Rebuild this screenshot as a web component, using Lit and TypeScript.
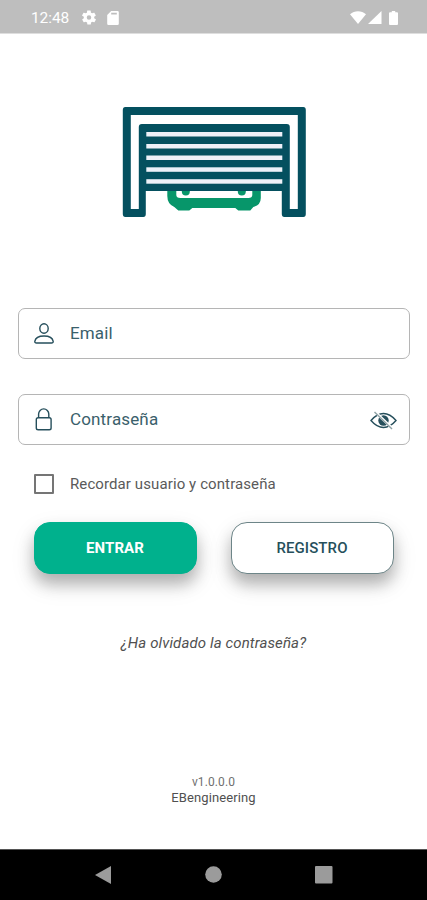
import { LitElement, html, css, svg } from "lit";
import { customElement, state } from "lit/decorators.js";

@customElement("status-bar")
class StatusBar extends LitElement {
  static styles = css`
    :host { display: flex; align-items: center; height: 34px; background: #bebebe; border-bottom: 1px solid #dedede; box-sizing: border-box; padding: 2px 29px 0 31px; color: #fff; font: 15.5px Roboto, sans-serif; }
    .time { width: 51px; letter-spacing: -.1px; }
    .gap { flex: 1; }
    svg { display: block; fill: #fff; }
    .gear { margin-right: 11px; }
    .wifi { margin-right: 2px; }
    .signal { margin-right: 7px; }
  `;
  render() {
    return html`
      <span class="time">12:48</span>
      <svg class="gear" width="14" height="15" viewBox="2 2 20 20"><path d="M19.4 13a7.500 7.500 0 0 0 0-2l2.100-1.600c.2-.2.250-.4.100-.7l-2-3.400c-.1-.2-.4-.3-.6-.2l-2.500 1a7.300 7.300 0 0 0-1.700-1l-.4-2.600a.5.5 0 0 0-.5-.5h-4c-.2 0-.4.2-.5.5l-.4 2.600c-.6.250-1.200.6-1.700 1l-2.500-1c-.2-.1-.5 0-.6.2l-2 3.400c-.1.200-.1.500.1.700L4.600 11a7.500 7.500 0 0 0 0 2l-2.100 1.600c-.2.200-.25.400-.1.700l2 3.400c.1.200.4.300.6.200l2.500-1c.5.400 1.100.75 1.700 1l.4 2.600c0 .3.200.5.500.5h4c.2 0 .4-.2.500-.5l.4-2.600c.6-.25 1.200-.6 1.700-1l2.500 1c.2.100.5 0 .6-.2l2-3.400c.1-.2.100-.5-.1-.7L19.400 13zM12 15.200a3.200 3.200 0 1 1 0-6.400 3.200 3.200 0 0 1 0 6.400z"/></svg>
      <svg width="12" height="14" viewBox="0 0 12 14"><path fill-rule="evenodd" d="M4.200 0H10.500A1.300 1.300 0 0 1 11.800 1.300V12.700A1.300 1.300 0 0 1 10.500 14H1.500A1.300 1.300 0 0 1 .2 12.700V4zM4.200 1.800V3.400H9.800V1.800z"/></svg>
      <span class="gap"></span>
      <svg class="wifi" width="16" height="13" viewBox="0 0 16 13"><path d="M0 3.200C4.500-.9 11.500-.9 16 3.200L8 13z"/></svg>
      <svg class="signal" width="14" height="13" viewBox="0 0 14 13"><path d="M13.500 0V13H0z"/></svg>
      <svg width="9" height="14" viewBox="0 0 9 14"><path d="M2.800 0H6.200V1.300H8Q9 1.300 9 2.300V13Q9 14 8 14H1Q0 14 0 13V2.300Q0 1.300 1 1.300H2.800z"/></svg>
    `;
  }
}

@customElement("garage-logo")
class GarageLogo extends LitElement {
  static styles = css`
    :host { display: block; width: 184px; height: 110px; }
    svg { display: block; }
    .frame { fill: #04505f; }
    .light { fill: #fff; }
    .slat { fill: #edf1f8; }
    .car { fill: #07966a; }
  `;
  render() {
    return html`
      <svg width="184" height="110" viewBox="-.3 0 184 110">
        <path class="car" d="M45 80H54V88Q54 91 58 91H126Q130 91 130 88V80H138.500V91Q138.500 98 131 100L128 103.500H116L113 101H70L67 103.500H56L52 100Q45 97 45 89z"/>
        <circle class="car" cx="63.500" cy="84.500" r="4"/>
        <circle class="car" cx="119.500" cy="84.500" r="4"/>
        <path class="frame" d="M3 0H181Q183.500 0 183.500 3V107Q183.500 110 181 110H162Q159.500 110 159.500 107V84H23.500V107Q23.500 110 21 110H3Q.5 110 .5 107V3Q.5 0 3 0z"/>
        <path class="light" d="M8.500 8H175.500V102H167.500V20Q167.500 17 164.500 17H19.500Q16.500 17 16.500 20V102H8.500z"/>
        ${[25, 37, 48.500, 60.300, 72.200].map(
          (y) => svg`<rect class="slat" x="24" y=${y} width="136" height="4.500" />`
        )}
      </svg>
    `;
  }
}

@customElement("app-root")
class AppRoot extends LitElement {
  @state() private remember = false;

  static styles = css`
    :host { display: flex; flex-direction: column; width: 427px; height: 900px; background: #fff; font-family: Roboto, sans-serif; overflow: hidden; }
    main { flex: 1; display: flex; flex-direction: column; padding: 73px 17.500px 0; }
    garage-logo { margin: 0 0 91px 104.500px; }
    .field { display: flex; align-items: center; box-sizing: border-box; height: 51px; border: 1px solid #b5b5b5; border-radius: 7px; padding: 0 12px 0 14px; margin-bottom: 35px; color: #3a606b; font-size: 17px; letter-spacing: .15px; }
    .field svg { fill: none; stroke: #264f5c; stroke-width: 1.400; }
    .label { flex: 1; margin-left: 15.500px; padding-bottom: 2px; }
    .remember { display: flex; align-items: center; gap: 16px; height: 20px; margin: -6px 0 28px 16.500px; font-size: 15px; color: #5a5a5a; letter-spacing: .1px; }
    .box { box-sizing: border-box; width: 20px; height: 20px; border: 2px solid #757575; border-radius: 1px; background: none; padding: 0; }
    .box.on { background: #00b18d; }
    .actions { display: flex; gap: 34px; margin-left: 16px; }
    .button { box-sizing: border-box; width: 163px; height: 52px; border: 1px solid #6d8588; border-radius: 16px; background: #fff; color: #264f5c; font: 500 15px Roboto, sans-serif; letter-spacing: .1px; padding: 0; box-shadow: 0 10px 15px rgba(0, 0, 0, .25), 0 10px 26px rgba(0, 0, 0, .1); }
    .primary { border-color: #00b18d; background: #00b18d; color: #fff; font-weight: 700; }
    .forgot { margin-top: 59px; text-align: center; font: italic 15px/20px Roboto, sans-serif; letter-spacing: .12px; color: #505050; }
    .version { margin-top: 122px; text-align: center; font-size: 12px; line-height: 15px; color: #707070; letter-spacing: .1px; }
    .company { font-size: 13px; color: #505050; letter-spacing: .1px; }
    nav { display: flex; justify-content: space-between; align-items: center; height: 51px; box-sizing: border-box; padding: 0 94.500px 1px 94px; background: #000; border-top: 1px solid #555; }
    nav svg { display: block; fill: #9b9b9b; }
  `;

  render() {
    return html`
      <status-bar></status-bar>
      <main>
        <garage-logo></garage-logo>
        <div class="field">
          <svg width="22" height="22" viewBox="0 0 22 22"><ellipse cx="11" cy="5.500" rx="4.200" ry="4.800"/><path d="M3.500 20Q1.600 20 1.800 18.300C2.400 15 5.800 13 11 13S19.600 15 20.200 18.300Q20.400 20 18.500 20z"/></svg>
          <span class="label">Email</span>
        </div>
        <div class="field">
          <svg width="22" height="24" viewBox="0 0 22 24"><rect x="3.300" y="9.700" width="14.800" height="12" rx="1.800"/><path d="M5.600 9.700V6a5.100 5.100 0 0 1 10.200 0V9.700"/></svg>
          <span class="label">Contraseña</span>
          <svg width="27" height="20" viewBox="0 0 27 20"><path d="M1 10.500Q7 3.500 13.500 3.500T26 10.500Q20 17.500 13.500 17.500T1 10.500z"/><circle cx="13.500" cy="10.500" r="5.200" fill="#264f5c" stroke="none"/><path stroke="#fff" stroke-width="2.600" d="M6 2.700L22.500 18.500"/><path stroke="#8fa1a5" d="M4.500 2L22 19"/></svg>
        </div>
        <div class="remember">
          <button class="box ${this.remember ? "on" : ""}" @click=${() => (this.remember = !this.remember)}></button>
          <span>Recordar usuario y contraseña</span>
        </div>
        <div class="actions">
          <button class="button primary">ENTRAR</button>
          <button class="button">REGISTRO</button>
        </div>
        <div class="forgot">¿Ha olvidado la contraseña?</div>
        <div class="version">v1.0.0.0<div class="company">EBengineering</div></div>
      </main>
      <nav>
        <svg width="18" height="18" viewBox="0 0 18 18"><path d="M17 0V18L1 9z"/></svg>
        <svg width="17" height="17" viewBox="0 0 17 17"><circle cx="8.500" cy="8.500" r="8.300"/></svg>
        <svg width="18" height="18" viewBox="0 0 18 18"><rect width="17.500" height="17.500" rx="1"/></svg>
      </nav>
    `;
  }
}
